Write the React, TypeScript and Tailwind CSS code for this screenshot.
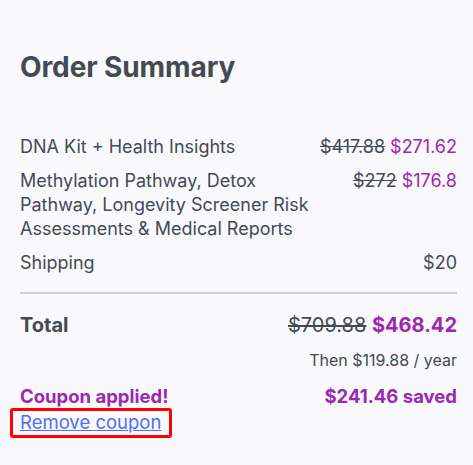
import React from 'react';

const lines = [
  { label: 'DNA Kit + Health Insights', was: '$417.88', now: '$271.62' },
  {
    label: 'Methylation Pathway, Detox Pathway, Longevity Screener Risk Assessments & Medical Reports',
    was: '$272',
    now: '$176.8',
  },
];

export default function App() {
  return (
    <div className="min-h-screen bg-[#f9f9fb] pl-5 pr-4 pt-[49px] text-[#434a54]" style={{ fontFamily: 'Inter, "Open Sans", sans-serif' }}>
      <h1 className="text-[28px] font-bold leading-9 tracking-[-0.1px]">Order Summary</h1>

      <div className="mt-[50px] space-y-2.5 text-[18px] leading-6">
        {lines.map((l) => (
          <div key={l.label} className="flex justify-between gap-4">
            <span className="max-w-[300px]">{l.label}</span>
            <span className="whitespace-nowrap">
              <span className="line-through">{l.was}</span>{' '}
              <span className="text-[#9c27b0]">{l.now}</span>
            </span>
          </div>
        ))}
        <div className="flex justify-between">
          <span>Shipping</span>
          <span>$20</span>
        </div>
      </div>

      <div className="mt-[17px] h-[2px] bg-[#cbd0da]" />

      <div className="mt-[17px] flex items-center justify-between text-[20px] leading-7">
        <span className="font-bold">Total</span>
        <span className="whitespace-nowrap">
          <span className="line-through">$709.88</span>{' '}
          <span className="font-bold text-[#9c27b0]">$468.42</span>
        </span>
      </div>

      <div className="mt-[9px] text-right text-[16px] leading-6">Then $119.88 / year</div>

      <div className="mt-[12px] flex justify-between text-[18.5px] font-bold leading-6 text-[#9c27b0]">
        <span>Coupon applied!</span>
        <span>$241.46 saved</span>
      </div>

      <div className="-ml-2.5 w-fit rounded-[3px] border-[3px] border-[#ff0000] pl-[7px] pr-[8px]">
        <a href="#" className="text-[18.5px] leading-[23px] text-[#4d6ef5] underline">Remove coupon</a>
      </div>
    </div>
  );
}
